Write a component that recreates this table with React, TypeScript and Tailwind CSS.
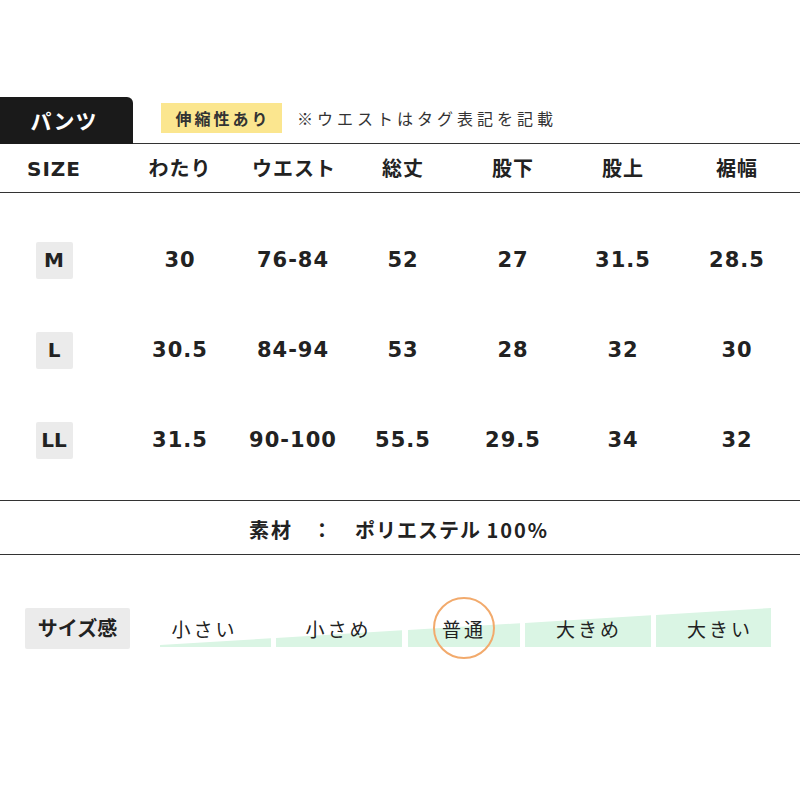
import React from "react";

const cols = "grid grid-cols-[108px_144px_82px_138px_82px_138px_90px] items-center";
const font = "font-['DejaVu_Sans','Noto_Sans_CJK_JP',sans-serif]";
const jp = "font-['Noto_Sans_CJK_JP',sans-serif]";

const headers = ["SIZE", "わたり", "ウエスト", "総丈", "股下", "股上", "裾幅"];
const rows = [
  ["M", "30", "76-84", "52", "27", "31.5", "28.5"],
  ["L", "30.5", "84-94", "53", "28", "32", "30"],
  ["LL", "31.5", "90-100", "55.5", "29.5", "34", "32"],
];

// wedge segments in container coords (container left = 160, top = 598)
const segs: [number, number][] = [
  [0, 111],
  [116, 242],
  [248, 360],
  [365, 491],
  [496, 611],
];
const topAt = (x: number) => 47 - x * 0.0606;

const labels = [
  { t: "小さい", w: 116, pl: "pr-[24px]" },
  { t: "小さめ", w: 132, pl: "pr-[4px]" },
  { t: "普通", w: 117, pl: "pr-[2px]", circle: true },
  { t: "大きめ", w: 131, pl: "pr-[0px]" },
  { t: "大きい", w: 115, pl: "pl-[16px]" },
];

export default function App() {
  return (
    <div className={`w-[800px] h-[800px] bg-white text-[#222] ${font} pt-[97px]`}>
      {/* title row */}
      <div className="flex h-[47px]">
        <div className="w-[133px] h-[47px] bg-[#1a1a1a] rounded-tr-[6px] flex items-center justify-center pr-[5px]">
          <span className={`${jp} text-white font-bold text-[21px] tracking-[1px] leading-none`}>パンツ</span>
        </div>
        <div className="flex-1 border-b border-[#333] flex items-start pt-[6px]">
          <div className="ml-[28px] w-[121px] h-[30px] bg-[#fbe68f] flex items-center justify-center">
            <span className={`${jp} text-[16px] font-bold text-[#333] tracking-[3px] leading-none pl-[3px] whitespace-nowrap`}>伸縮性あり</span>
          </div>
          <div className="h-[30px] flex items-center ml-[15px]">
            <span className={`${jp} text-[16px] text-[#333] tracking-[4px] leading-none whitespace-nowrap`}>※ウエストはタグ表記を記載</span>
          </div>
        </div>
      </div>

      {/* header */}
      <div className={`${cols} h-[49px] border-b border-[#333] pt-[6px]`}>
        {headers.map((h, i) => (
          <div key={i} className="text-center whitespace-nowrap">
            <span className="text-[20px] font-bold leading-none tracking-[1px]">{h}</span>
          </div>
        ))}
      </div>

      {/* data */}
      <div className="pt-[22px] pb-[15px] border-b border-[#333]">
        {rows.map((r, ri) => (
          <div key={ri} className={`${cols} h-[90px]`}>
            {r.map((c, ci) => (
              <div key={ci} className="flex justify-center whitespace-nowrap">
                {ci === 0 ? (
                  <div className="w-[37px] h-[37px] bg-[#ebebeb] rounded-[2px] flex items-center justify-center">
                    <span className="text-[20px] font-bold leading-none">{c}</span>
                  </div>
                ) : (
                  <span className="text-[21px] font-bold tracking-[1px] leading-none">{c}</span>
                )}
              </div>
            ))}
          </div>
        ))}
      </div>

      {/* material */}
      <div className="h-[54px] border-b border-[#333] flex items-center justify-center pt-[4px]">
        <span className={`${jp} text-[20px] font-bold leading-none whitespace-nowrap pr-[2px]`}>
          <span className="tracking-[2px]">素材</span>
          <span className="inline-block w-[19px]"></span>：<span className="inline-block w-[23px]"></span>
          <span className="tracking-[1px]">ポリエステル </span>
          <span className="tracking-[2px]">100%</span>
        </span>
      </div>

      {/* size feel */}
      <div className="flex items-center mt-[43px] h-[60px]">
        <div className="ml-[25px] w-[105px] h-[41px] bg-[#ebebeb] rounded-[2px] flex items-center justify-center">
          <span className={`${jp} text-[20px] font-bold leading-none whitespace-nowrap`}>サイズ感</span>
        </div>
        <div className="relative ml-[30px] w-[611px] h-[60px]">
          <svg className="absolute inset-0" width="611" height="60" viewBox="0 0 611 60">
            {segs.map(([a, b], i) => (
              <polygon
                key={i}
                points={`${a},49 ${b},49 ${b},${topAt(b).toFixed(1)} ${a},${topAt(a).toFixed(1)}`}
                fill="#daf5e4"
              />
            ))}
          </svg>
          <div className="relative flex h-[60px] -ml-[3px]">
            {labels.map((l, i) => (
              <div
                key={i}
                className={`relative flex items-center justify-center h-[60px] ${l.pl}`}
                style={{ width: l.w }}
              >
                {l.circle && (
                  <div className="absolute left-1/2 top-[-1px] -translate-x-1/2 w-[62px] h-[62px] rounded-full border-2 border-[#f2aa6c]"></div>
                )}
                <span className={`${jp} relative text-[19px] tracking-[3px] leading-none pl-[3px] text-[#222] whitespace-nowrap`}>{l.t}</span>
              </div>
            ))}
          </div>
        </div>
      </div>
    </div>
  );
}
